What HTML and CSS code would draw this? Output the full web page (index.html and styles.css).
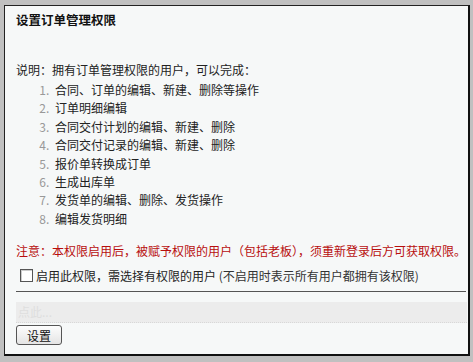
FILE: index.html
```html
<!DOCTYPE html>
<html lang="zh-CN">
<head>
    <meta charset="UTF-8">
    <title>设置订单管理权限</title>
    <link rel="stylesheet" href="styles.css">
</head>
<body>
    <div class="panel">
        <h3 class="title">设置订单管理权限</h3>

        <p class="desc">说明：拥有订单管理权限的用户，可以完成：</p>
        <ol class="ops">
            <li><span>合同、订单的编辑、新建、删除等操作</span></li>
            <li><span>订单明细编辑</span></li>
            <li><span>合同交付计划的编辑、新建、删除</span></li>
            <li><span>合同交付记录的编辑、新建、删除</span></li>
            <li><span>报价单转换成订单</span></li>
            <li><span>生成出库单</span></li>
            <li><span>发货单的编辑、删除、发货操作</span></li>
            <li><span>编辑发货明细</span></li>
        </ol>

        <p class="notice">注意：本权限启用后，被赋予权限的用户（包括老板），须重新登录后方可获取权限。</p>

        <label class="enable">
            <input type="checkbox" class="check">
            <span>启用此权限，需选择有权限的用户</span>
            <span class="hint">&nbsp;(不启用时表示所有用户都拥有该权限)</span>
        </label>

        <div class="rule"></div>
        <div class="users">点此...</div>

        <button class="btn">设置</button>
    </div>
</body>
</html>
```

FILE: styles.css
```css
body {
    margin: 0;
    padding: 5px 4px 0 4px;
    background-color: #c0c0c0;
    font-family: "Noto Sans CJK SC", "Liberation Sans", sans-serif;
    font-size: 12px;
    color: #222;
}
.panel {
    width: 451px;
    height: 343px;
    padding: 5px 1px 0 11px;
    background-color: #f6f8f8;
    border-top: 1px solid #222;
    border-left: 1px solid #222;
    border-right: 2px solid #111;
    border-bottom: 2px solid #111;
}
.title {
    margin: 0;
    font-size: 12.5px;
    line-height: 18px;
    font-weight: bold;
    color: #111;
}
.desc {
    margin: 32px 0 0 0;
    line-height: 18px;
}
.ops {
    margin: 2px 0 0 0;
    padding-left: 36px;
    line-height: 18.4px;
    color: #999; /* numeros em cinza */
}
.ops li span {
    color: #222;
    padding-left: 3px;
}
.notice {
    margin: 14px 0 0 0;
    line-height: 18px;
    color: #b80e0e;
}
.enable {
    display: flex;
    align-items: center;
    margin-top: 6px;
    height: 18px;
}
.check {
    appearance: none;
    width: 13px;
    height: 13px;
    margin: 0 3px 0 4px;
    border: 1px solid #555;
    background-color: #fff;
    box-shadow: inset 1px 1px 0 #ccc;
}
.hint {
    color: #333;
}
.rule {
    margin-top: 7px;
    border-top: 1px solid #555;
    margin-right: 1px;
}
.users {
    margin-top: 10px;
    height: 20px;
    line-height: 20px;
    background-color: #ececec;
    border-bottom: 1px dotted #d8d8d8;
    color: #dedede;
    padding-left: 2px;
}
.btn {
    margin-top: 2px;
    width: 46px;
    height: 20px;
    padding: 0;
    font-family: "Noto Sans CJK SC", sans-serif;
    font-size: 12px;
    color: #111;
    background: linear-gradient(#fdfdfd, #e4e4e4);
    border: 1px solid #555;
    border-radius: 3px;
}
```
